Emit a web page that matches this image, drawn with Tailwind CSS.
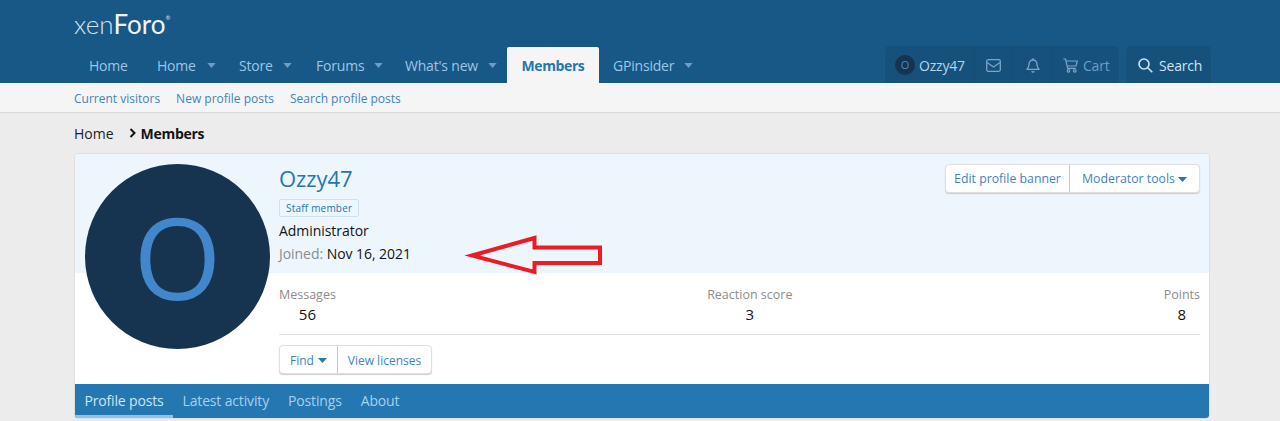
<!DOCTYPE html>
<html lang="en">
<head>
    <meta charset="UTF-8">
    <meta name="viewport" content="width=device-width, initial-scale=1.0">
    <title>Ozzy47 | Members</title>
    <script src="https://cdn.jsdelivr.net/npm/@tailwindcss/browser@4"></script>
</head>
<body class="relative h-[421px] overflow-hidden bg-[#ececec] font-['Open_Sans','Noto_Sans',sans-serif] text-[14px] text-[#141414]">

    <!-- header -->
    <header class="h-[83px] bg-[#185886]">
        <div class="flex h-[47px] items-start pl-[74px] pt-[8px]">
            <div class="flex items-start font-['Lato',sans-serif] text-[26px] leading-[32px] text-[#d5e3ee]">
                <span class="font-light">xen</span><span class="font-normal text-[#eef4f9]">Foro</span><span class="mt-[6px] text-[6px] leading-[8px]">®</span>
            </div>
        </div>
        <nav class="flex h-[36px] items-stretch pl-[74px] pr-[69px] text-[14px] tracking-[-0.2px] text-[#9cc6e6]">
            <a class="flex w-[68px] items-center pl-[15px]">Home</a>
            <a class="flex w-[82px] items-center pl-[15px]">Home<svg class="ml-[11px] h-[5px] w-[9px]" viewBox="0 0 10 6"><path d="M0 0h10L5 6z" fill="#6d9fc6"/></svg></a>
            <a class="flex w-[77px] items-center pl-[15px]">Store<svg class="ml-[10px] h-[5px] w-[9px]" viewBox="0 0 10 6"><path d="M0 0h10L5 6z" fill="#6d9fc6"/></svg></a>
            <a class="flex w-[89px] items-center pl-[15px]">Forums<svg class="ml-[10px] h-[5px] w-[9px]" viewBox="0 0 10 6"><path d="M0 0h10L5 6z" fill="#6d9fc6"/></svg></a>
            <a class="flex w-[117px] items-center pl-[15px]">What's new<svg class="ml-[10px] h-[5px] w-[9px]" viewBox="0 0 10 6"><path d="M0 0h10L5 6z" fill="#6d9fc6"/></svg></a>
            <a class="flex w-[92px] items-center justify-center rounded-t-[2px] bg-[#f5f5f5] font-bold tracking-[-0.4px] text-[#2577b1]">Members</a>
            <a class="ml-[14px] flex items-center">GPinsider<svg class="ml-[10px] h-[5px] w-[9px]" viewBox="0 0 10 6"><path d="M0 0h10L5 6z" fill="#6d9fc6"/></svg></a>
            <div class="ml-auto -mt-[1px] flex items-stretch">
                <div class="flex w-[234px] items-stretch rounded-t-[4px] bg-[#16517b]">
                    <a class="flex w-[90px] items-center gap-[4px] border-r border-[#154c74] pl-[10px] pt-[1px] text-[#b4d5ed]">
                        <span class="flex h-[20px] w-[20px] items-center justify-center rounded-full bg-[#163350] text-[11px] text-[#4a88cc]">O</span>Ozzy47
                    </a>
                    <a class="flex w-[38px] items-center justify-center border-r border-[#154c74] pt-[1px]">
                        <svg class="h-[13px] w-[15px]" viewBox="0 0 15 13" fill="none" stroke="#7ba6c8" stroke-width="1.3"><rect x=".7" y=".7" width="13.6" height="11.6" rx="1.5"/><path d="M1 3.5l6.5 4.5L14 3.5"/></svg>
                    </a>
                    <a class="flex w-[40px] items-center justify-center border-r border-[#154c74] pt-[1px]">
                        <svg class="h-[15px] w-[14px]" viewBox="0 0 14 15" fill="none" stroke="#7ba6c8" stroke-width="1.3"><path d="M1 11.3c1.3-1.2 2-2.3 2-5C3 3.800 4.800 2 7 2s4 1.800 4 4.300c0 2.700.7 3.800 2 5z" stroke-linejoin="round"/><path d="M7 .3V2"/><path d="M5.700 13.200a1.400 1.400 0 0 0 2.600 0"/></svg>
                    </a>
                    <a class="flex flex-1 items-center gap-[5px] pl-[10px] pt-[1px] text-[#6f9dc2]">
                        <svg class="h-[15px] w-[15px]" viewBox="0 0 15 15" fill="none" stroke="#7ba6c8" stroke-width="1.2"><path d="M.3 1h2.200l2.200 9.300h8" stroke-linejoin="round"/><path d="M3 3h11.300l-1.300 5H4.200"/><circle cx="5.500" cy="12.800" r="1.300"/><circle cx="11.800" cy="12.800" r="1.300"/></svg>Cart
                    </a>
                </div>
                <a class="ml-[7px] flex w-[85px] items-center gap-[6px] rounded-t-[4px] bg-[#16517b] pl-[12px] pt-[1px] text-[#cfe4f4]">
                    <svg class="h-[15px] w-[15px]" viewBox="0 0 15 15" fill="none" stroke="#cfe4f4" stroke-width="1.600"><circle cx="6" cy="6" r="5"/><path d="M9.700 9.700L14.300 14.300"/></svg>Search
                </a>
            </div>
        </nav>
    </header>

    <!-- sub nav -->
    <div class="flex h-[30px] items-center gap-[16px] border-b border-[#d8d8d8] bg-[#f5f5f5] pl-[74px] pt-[2px] text-[12px] text-[#3f84bd]">
        <a>Current visitors</a>
        <a>New profile posts</a>
        <a>Search profile posts</a>
    </div>

    <!-- breadcrumb -->
    <div class="flex h-[40px] items-center pl-[74px] text-[14px]">
        <span class="text-[#1c1c1c]">Home</span>
        <svg class="ml-[15px] mr-[5px] h-[10px] w-[7px]" viewBox="0 0 7 10" fill="none" stroke="#141414" stroke-width="2"><path d="M1.500 1l4 4-4 4"/></svg>
        <span class="font-bold tracking-[-0.3px]">Members</span>
    </div>

    <!-- profile card -->
    <main class="relative ml-[74px] w-[1136px] overflow-hidden rounded-[4px] border border-[#dfdfdf] bg-white">
        <div class="absolute left-[10px] top-[10px] flex h-[185px] w-[185px] items-center justify-center rounded-full bg-[#163350] text-[113px] leading-none text-[#4286cc]">O</div>

        <section class="flex h-[119px] items-start justify-between bg-[#edf6fd] pl-[204px] pr-[9px] pt-[9px]">
            <div class="tracking-[-0.05px]">
                <h1 class="text-[22px] leading-[30px] text-[#2577b1]">Ozzy47</h1>
                <span class="mt-[6px] block w-fit rounded-[2px] border border-[#c9e2f5] px-[6px] text-[10px] leading-[16px] tracking-[.2px] text-[#2577b1]">Staff member</span>
                <p class="mt-[2px] leading-[24px]">Administrator</p>
                <p class="leading-[22px]"><span class="text-[#8c8c8c]">Joined:</span> Nov 16, 2021</p>
            </div>
            <div class="mt-[1px] flex h-[29px] rounded-[4px] border border-[#dfdfdf] bg-white pt-[2px] text-[12.300px] text-[#3f84bd] shadow-[0_1px_1px_#ccc]">
                <a class="flex w-[124px] items-center justify-center border-r border-[#c8c8c8] -mt-[2px] pt-[2px]">Edit profile banner</a>
                <a class="flex w-[129px] items-center justify-center gap-[3px]">Moderator tools<svg class="h-[5px] w-[9px]" viewBox="0 0 9 5"><path d="M0 0h9L4.500 5z" fill="#2577b1"/></svg></a>
            </div>
        </section>

        <section class="pl-[204px] pr-[9px]">
            <div class="flex justify-between border-b border-[#e0e0e0] pb-[9px] pt-[14px]">
                <dl class="text-center"><dt class="text-[12.500px] leading-[16px] text-[#8c8c8c]">Messages</dt><dd class="text-[15px] leading-[22px]">56</dd></dl>
                <dl class="text-center"><dt class="text-[12.500px] leading-[16px] text-[#8c8c8c]">Reaction score</dt><dd class="text-[15px] leading-[22px]">3</dd></dl>
                <dl class="text-center"><dt class="text-[12.500px] leading-[16px] text-[#8c8c8c]">Points</dt><dd class="text-[15px] leading-[22px]">8</dd></dl>
            </div>
            <div class="mt-[10px] flex h-[29px] w-fit rounded-[4px] border border-[#dfdfdf] bg-white text-[12px] text-[#3f84bd] shadow-[0_1px_1px_#ccc]">
                <a class="flex w-[58px] items-center justify-center gap-[4px] border-r border-[#c8c8c8] pt-[2px]">Find<svg class="h-[5px] w-[9px]" viewBox="0 0 9 5"><path d="M0 0h9L4.500 5z" fill="#2577b1"/></svg></a>
                <a class="flex w-[93px] items-center justify-center pt-[2px]">View licenses</a>
            </div>
        </section>

        <nav class="mt-[10px] flex h-[34px] bg-[#2577b1] text-[14px] tracking-[-0.15px] text-[#a8d0eb]">
            <a class="flex w-[98px] items-center justify-center border-b-[3px] border-[#8fc4ea] pt-[1px] text-[#cfe4f4]">Profile posts</a>
            <a class="flex items-center px-[9.500px] pb-[2px]">Latest activity</a>
            <a class="flex items-center px-[9.500px] pb-[2px]">Postings</a>
            <a class="flex items-center px-[9.500px] pb-[2px]">About</a>
        </nav>
    </main>

    <!-- annotation arrow drawn over the screenshot -->
    <svg class="absolute left-0 top-0 h-[421px] w-[1280px]" viewBox="0 0 1280 421" fill="none">
        <path d="M472 255.500L534.500 238v9.500H600v15.500h-65.500v9z" stroke="#ed1c24" stroke-width="4"/>
    </svg>
</body>
</html>
